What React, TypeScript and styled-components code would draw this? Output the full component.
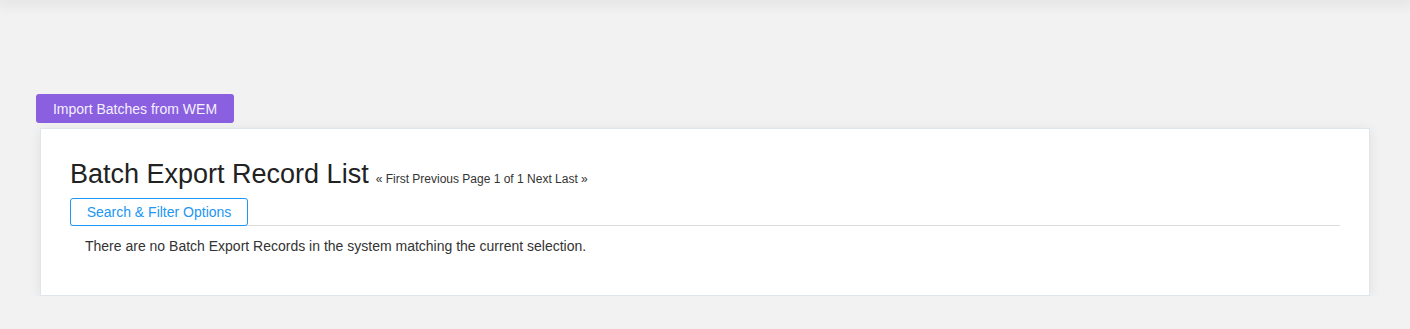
import React, { FC } from 'react';
import styled, { createGlobalStyle } from 'styled-components';

const GlobalStyle = createGlobalStyle`
  html, body {
    margin: 0;
    padding: 0;
    background: #f2f2f2;
    font-family: "Liberation Sans", Arial, sans-serif;
    color: #333;
  }
`;

const TopShadow = styled.div`
  height: 0;
  box-shadow: 0 0 14px 3px rgba(0, 0, 0, 0.12);
`;

const Page = styled.main`
  padding: 94px 40px 0 36px;
`;

const ImportButton = styled.button`
  display: block;
  height: 29px;
  width: 198px;
  padding: 0;
  border: none;
  border-radius: 3px;
  background: #8a5fe0;
  color: #f4f0ff;
  font-family: inherit;
  font-size: 14px;
  cursor: pointer;
`;

const Card = styled.section`
  margin: 5px 0 0 4px;
  background: #fff;
  border: 1px solid #dfe5ec;
  box-shadow: 0 2px 12px rgba(0, 0, 0, 0.08);
  padding: 29px 29px 40px 29px;
`;

const TitleRow = styled.div`
  display: flex;
  align-items: baseline;
  gap: 7px;
`;

const Title = styled.h2`
  margin: 0;
  font-size: 27px;
  font-weight: normal;
  line-height: 32px;
  color: #222;
`;

const Pager = styled.span`
  font-size: 12px;
  color: #333;
`;

const FilterBar = styled.div`
  margin-top: 8px;
  border-bottom: 1px solid #dcdcdc;
`;

const FilterButton = styled.button`
  display: block;
  height: 28px;
  width: 178px;
  padding: 0;
  background: #fff;
  border: 1px solid #2196f3;
  border-radius: 3px;
  color: #2196f3;
  font-family: inherit;
  font-size: 14px;
  margin-bottom: -1px;
`;

const Message = styled.p`
  margin: 11px 0 0 15px;
  font-size: 14px;
  line-height: 18px;
  color: #333;
`;

const App: FC = () => (
  <>
    <GlobalStyle />
    <TopShadow />
    <Page>
      <ImportButton>Import Batches from WEM</ImportButton>
      <Card>
        <TitleRow>
          <Title>Batch Export Record List</Title>
          <Pager>« First Previous Page 1 of 1 Next Last »</Pager>
        </TitleRow>
        <FilterBar>
          <FilterButton>Search &amp; Filter Options</FilterButton>
        </FilterBar>
        <Message>
          There are no Batch Export Records in the system matching the current
          selection.
        </Message>
      </Card>
    </Page>
  </>
);

export default App;
